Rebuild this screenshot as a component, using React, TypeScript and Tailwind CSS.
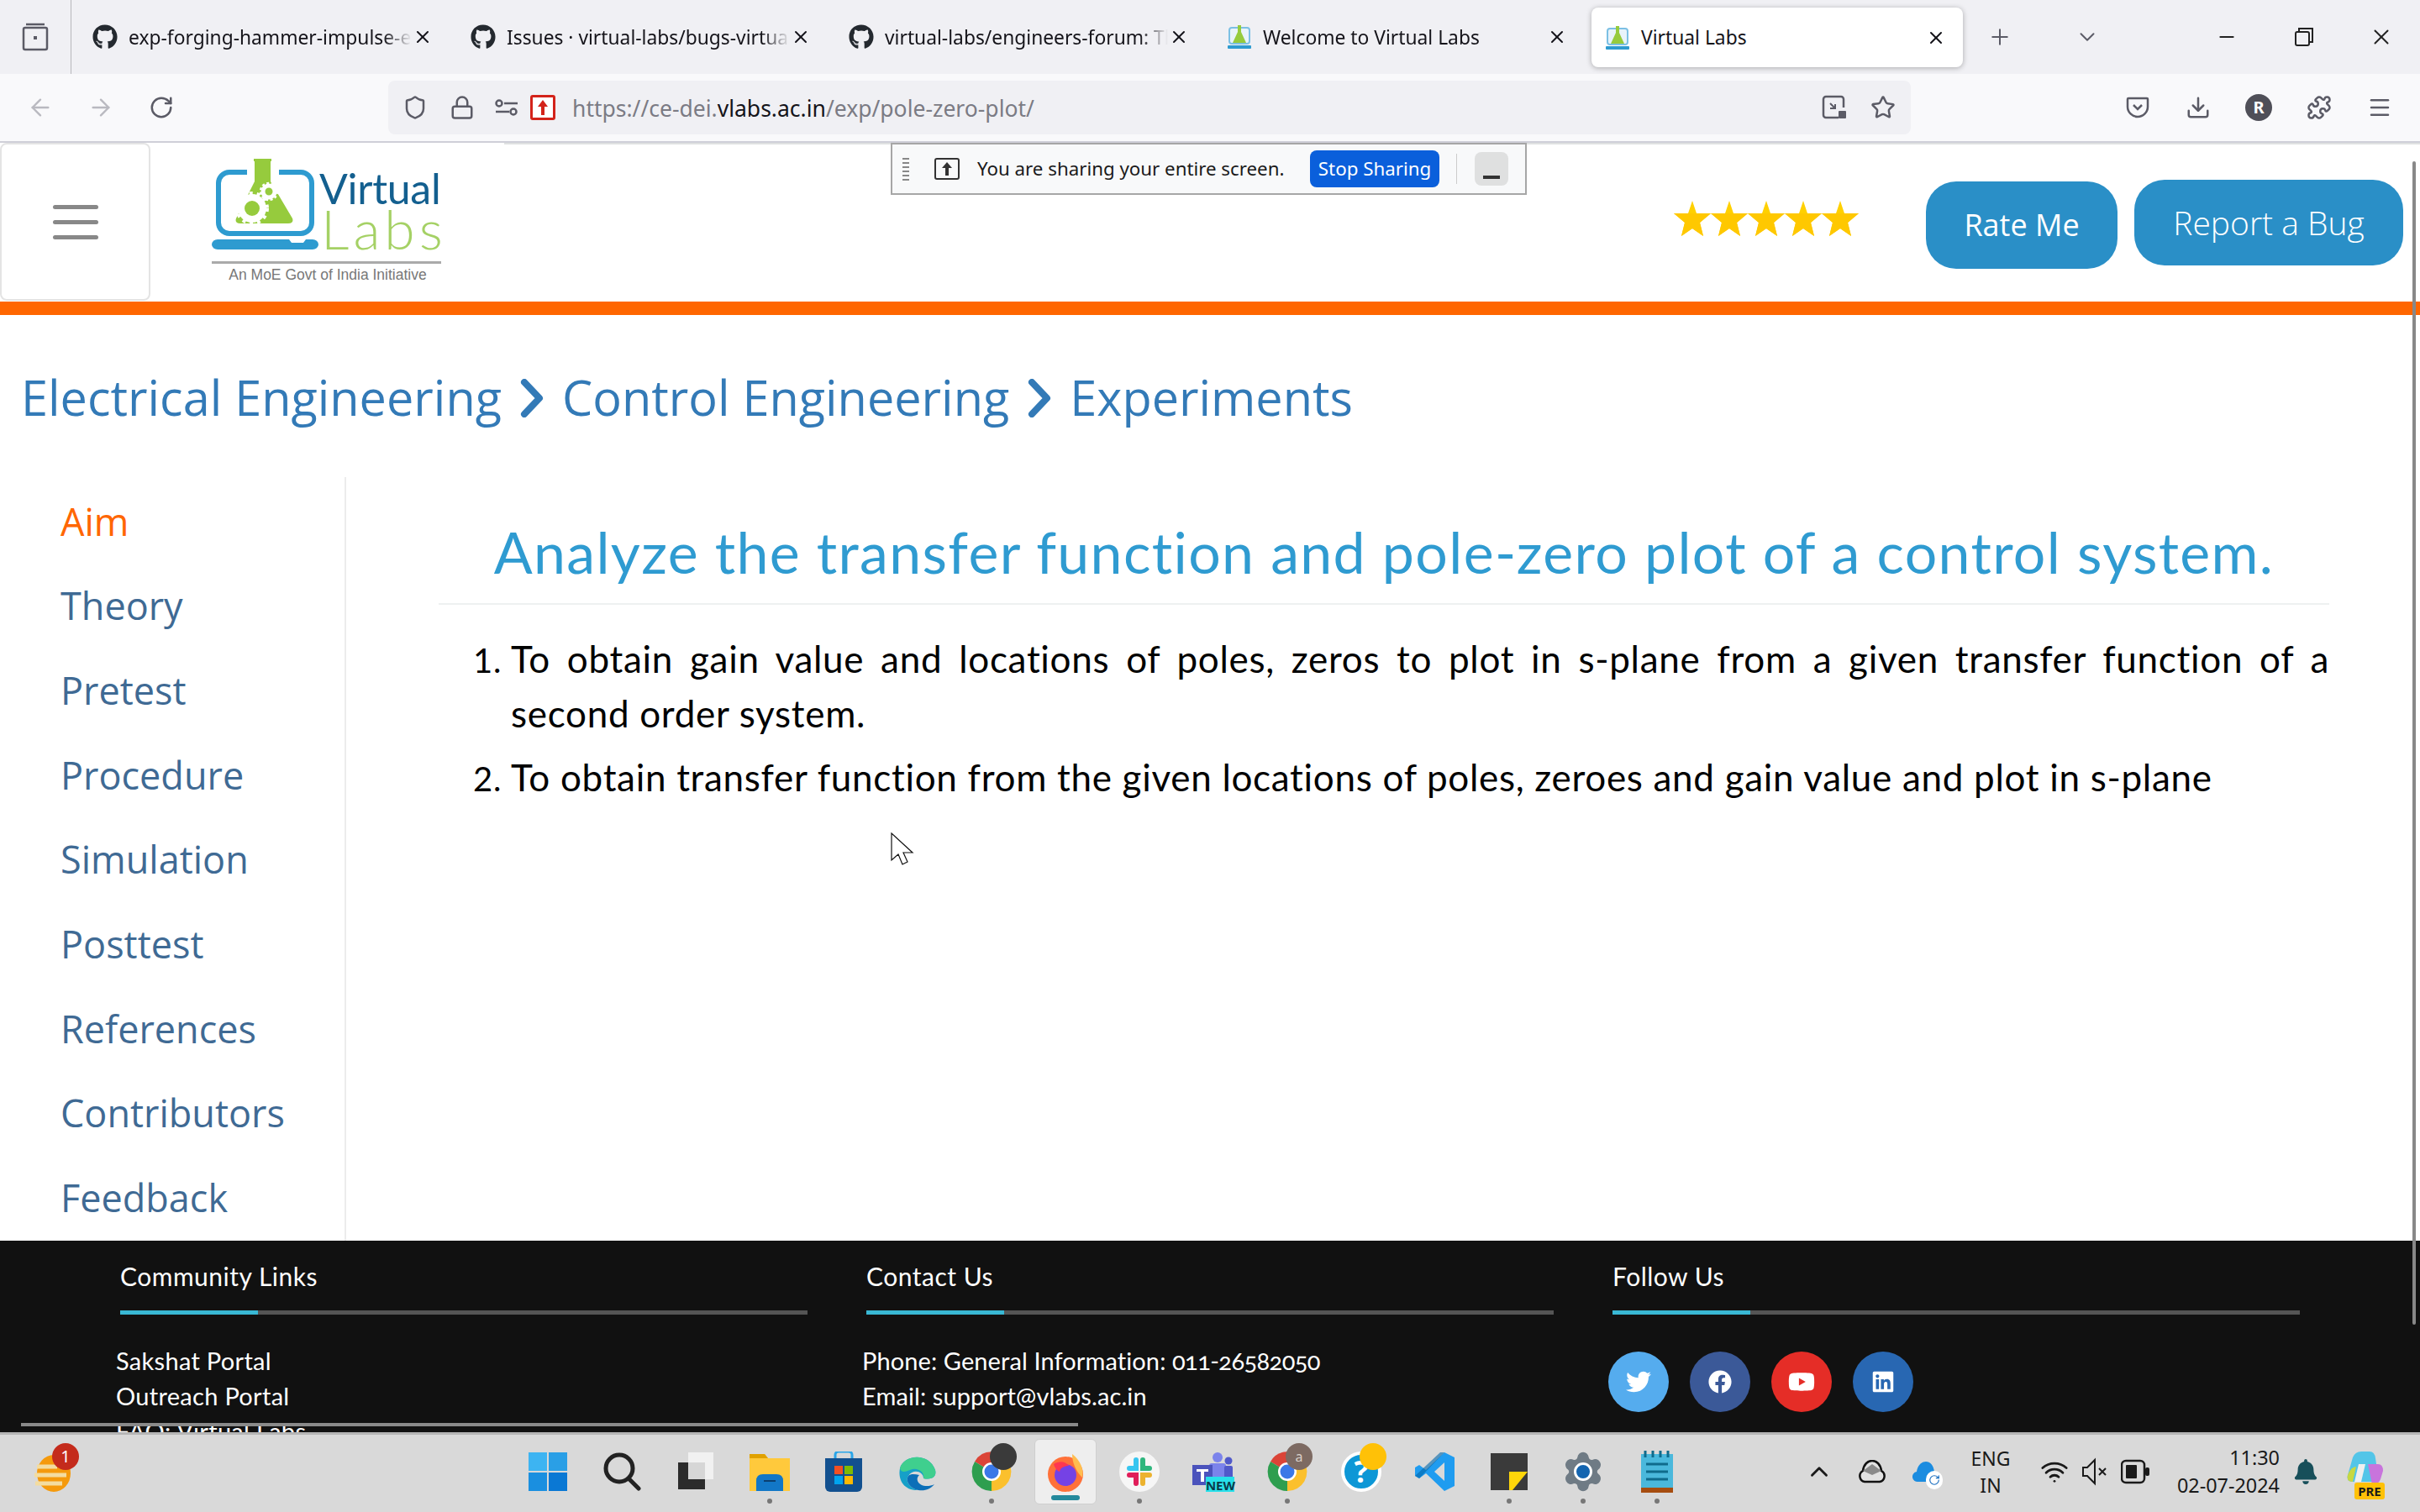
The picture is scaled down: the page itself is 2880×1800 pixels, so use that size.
import React from 'react';
import { ArrowLeft, ArrowRight, RotateCw, Shield, Lock, Star, Download, Puzzle, Menu, X, Plus, ChevronDown, ChevronUp, Minus, Wifi, Settings } from 'lucide-react';
import { FaGithub, FaTwitter, FaFacebook, FaYoutube, FaLinkedin, FaBell } from 'react-icons/fa';

const FlaskIcon = ({ size = 30 }: { size?: number }) => (
  <svg width={size} height={size} viewBox="0 0 30 30">
    <rect x="3" y="4" width="24" height="19" rx="3" fill="#e8f3fa" stroke="#7cc0e4" strokeWidth="2" />
    <path d="M13 1h4v8l6 13H7l6-13z" fill="#96cb3d" />
    <rect x="1" y="25" width="28" height="4" rx="1" fill="#2e9bd0" />
  </svg>
);

const tabs = [
  { title: 'exp-forging-hammer-impulse-experiment', git: true },
  { title: 'Issues · virtual-labs/bugs-virtual-labs', git: true },
  { title: 'virtual-labs/engineers-forum: The forum', git: true },
  { title: 'Welcome to Virtual Labs', git: false },
];

function Tab({ title, git }: { title: string; git: boolean }) {
  return (
    <div className="flex h-[72px] w-[442px] items-center">
      <div className="ml-[20px] w-[43px] shrink-0">
        {git ? <FaGithub size={30} color="#24292f" /> : <FlaskIcon />}
      </div>
      <div className="w-[337px] overflow-hidden whitespace-nowrap pt-[3px] text-[22.8px] text-[#15141a] [mask-image:linear-gradient(to_right,black_90%,transparent)]">
        {title}
      </div>
      <X size={24} className="ml-[1px] text-[#15141a]" />
    </div>
  );
}

function NavIcon({ children, w = 72 }: { children: React.ReactNode; w?: number }) {
  return <div style={{ width: w }} className="flex shrink-0 items-center justify-center">{children}</div>;
}

const Logo = () => (
  <svg width="290" height="170" viewBox="0 0 290 170" className="ml-[66px] mt-[10px]">
    {/* origin sits at page 245,180 */}
    <path d="M49 25H28a13 13 0 0 0-13 13v47a13 13 0 0 0 13 13h85a13 13 0 0 0 13-13V38a13 13 0 0 0-13-13H87" fill="none" stroke="#2e9bd0" strokeWidth="6" />
    <path d="M7 105h92l3 4h14l3-4h8a7 6 0 0 1 0 12H14a7 6 0 0 1 0-12z" fill="#2e9bd0" />
    <path d="M57 9h21v3h-1v24l26 44q2 6-5 6H41q-7 0-5-6l22-44V12h-1z" fill="#96cb3d" />
    <circle cx="55" cy="68" r="13" fill="none" stroke="#fff" strokeWidth="8" />
    <circle cx="55" cy="68" r="18" fill="none" stroke="#fff" strokeWidth="4" strokeDasharray="4 5" />
    <circle cx="75" cy="48" r="7" fill="none" stroke="#fff" strokeWidth="5" />
    <circle cx="75" cy="48" r="10" fill="none" stroke="#fff" strokeWidth="2.5" strokeDasharray="3 2.5" />
    <text x="135" y="63" fontFamily="Lato, sans-serif" fontSize="50" letterSpacing="-0.3" fill="#135f8f">Virtual</text>
    <text x="137" y="117" fontFamily="Lato, sans-serif" fontSize="66" fontWeight="300" letterSpacing="5" fill="#a5d165">Labs</text>
    <rect x="7" y="131" width="273" height="3" fill="#aaaaaa" />
    <text x="145" y="153" textAnchor="middle" fontFamily="Liberation Sans, sans-serif" fontSize="17.5" fill="#777777">An MoE Govt of India Initiative</text>
  </svg>
);

const RatingStar = () => (
  <svg width="44" height="42" viewBox="0 0 44 42">
    <path d="M22 0l5 15h17L31 26l4 16-13-9-13 9 4-16L0 15h17z" fill="#ffd000" />
    <path d="M0 15h44L31 26l4 16-13-9-13 9 4-16z" fill="#ffc800" />
  </svg>
);

const Chevron = () => (
  <svg width="28" height="46" viewBox="0 0 28 46" fill="none" stroke="#337ab7" strokeWidth="8" strokeLinecap="round" strokeLinejoin="round">
    <path d="M5 4l18 19L5 42" />
  </svg>
);

const sideItems = ['Aim', 'Theory', 'Pretest', 'Procedure', 'Simulation', 'Posttest', 'References', 'Contributors', 'Feedback'];

function FooterColumn({ title, children }: { title: string; children: React.ReactNode }) {
  return (
    <div className="w-[818px] shrink-0">
      <div className="h-[40px] text-[30px] leading-[40px] tracking-[0.5px]">{title}</div>
      <div className="mt-[21px] flex h-[5px] bg-[#555555]">
        <div className="w-[164px] bg-[#39b8d4]" />
      </div>
      {children}
    </div>
  );
}

const TaskSlot = ({ children, dot }: { children: React.ReactNode; dot?: boolean }) => (
  <div className="flex w-[88px] shrink-0 flex-col items-center pt-[20px]">
    <div className="relative h-[48px] w-[56px] flex items-center justify-center">{children}</div>
    {dot && <div className="mt-[8px] h-[6px] w-[6px] rounded-full bg-[#777777]" />}
  </div>
);

const ChromeIcon = () => (
  <svg width="48" height="48" viewBox="0 0 48 48">
    <path d="M24 24 4 12A23 23 0 0 1 44 12z" fill="#db4437" />
    <path d="M24 24 44 12A23 23 0 0 1 24 47z" fill="#fbc02d" />
    <path d="M24 24 24 47A23 23 0 0 1 4 12z" fill="#2e9e4f" />
    <circle cx="24" cy="24" r="11" fill="#fff" />
    <circle cx="24" cy="24" r="8.5" fill="#3b78e7" />
  </svg>
);

export default function App() {
  return (
    <div className="relative flex h-[1800px] w-[2880px] flex-col overflow-hidden bg-white font-['Noto_Sans',sans-serif]">
      {/* tab strip */}
      <div className="flex h-[88px] shrink-0 items-center bg-[#f0f0f4]">
        <div className="flex h-full w-[85px] shrink-0 items-center justify-center border-r border-[#b8b8bc]">
          <svg width="32" height="34" viewBox="0 0 32 34" fill="none" stroke="#5b5b66" strokeWidth="2.5">
            <path d="M5 2h22M2 8a2 2 0 0 1 2-2h24a2 2 0 0 1 2 2v22a2 2 0 0 1-2 2H4a2 2 0 0 1-2-2z" />
            <rect x="14" y="16" width="4" height="4" fill="#5b5b66" stroke="none" />
          </svg>
        </div>
        <div className="ml-[5px] flex gap-[8px]">
          {tabs.map(t => <Tab key={t.title} title={t.title} git={t.git} />)}
        </div>
        <div className="ml-[12px] flex h-[71px] w-[442px] items-center rounded-[8px] bg-white pt-[1px] shadow-[0_1px_6px_rgba(0,0,0,0.3)]">
          <div className="ml-[16px] w-[43px]"><FlaskIcon /></div>
          <div className="w-[339px] pt-[2px] text-[22.8px] text-[#15141a]">Virtual Labs</div>
          <X size={24} className="text-[#15141a]" />
        </div>
        <NavIcon w={87}><Plus size={30} strokeWidth={1.6} className="text-[#5b5b66]" /></NavIcon>
        <NavIcon w={122}><ChevronDown size={30} strokeWidth={1.6} className="text-[#5b5b66]" /></NavIcon>
        <div className="ml-auto flex">
          <NavIcon w={92}><Minus size={26} strokeWidth={2} className="text-[#222]" /></NavIcon>
          <NavIcon w={92}>
            <svg width="22" height="22" viewBox="0 0 22 22" fill="none" stroke="#222" strokeWidth="2"><path d="M5 4V1h16v16h-4" /><rect x="1" y="5" width="16" height="16" rx="2" /></svg>
          </NavIcon>
          <NavIcon w={92}><X size={30} strokeWidth={1.6} className="text-[#222]" /></NavIcon>
        </div>
      </div>

      {/* nav bar */}
      <div className="flex h-[82px] shrink-0 items-center border-b-2 border-[#cfcfd8] bg-[#f9f9fb] pl-[12px]">
        <NavIcon><ArrowLeft size={32} strokeWidth={1.8} className="text-[#b9b9c0]" /></NavIcon>
        <NavIcon><ArrowRight size={32} strokeWidth={1.8} className="text-[#b9b9c0]" /></NavIcon>
        <NavIcon><RotateCw size={30} strokeWidth={2} className="text-[#5b5b66]" /></NavIcon>
        <div className="ml-[234px] flex h-[64px] w-[1812px] items-center rounded-[8px] bg-[#f0f0f4]">
          <NavIcon w={64}><Shield size={30} strokeWidth={2} className="text-[#5b5b66]" /></NavIcon>
          <NavIcon w={48}><Lock size={30} strokeWidth={2} className="text-[#5b5b66]" /></NavIcon>
          <NavIcon w={57}>
            <svg width="28" height="20" viewBox="0 0 28 20" fill="none" stroke="#5b5b66" strokeWidth="2.5"><circle cx="5" cy="5" r="3.5" /><path d="M11 5h16M1 15h16" /><circle cx="22" cy="15" r="3.5" /></svg>
          </NavIcon>
          <div className="flex h-[30px] w-[30px] items-center justify-center rounded-[3px] border-[3px] border-[#d3231a] bg-white">
            <svg width="14" height="18" viewBox="0 0 14 18"><path d="M7 0l6 8H9v10H5V8H1z" fill="#d3231a" /></svg>
          </div>
          <div className="ml-[20px] whitespace-nowrap pt-[4px] text-[26.5px] text-[#7b7b84]">
            https://ce-dei.<span className="text-[#15141a]">vlabs.ac.in</span>/exp/pole-zero-plot/
          </div>
          <div className="ml-auto flex items-center pr-[4px]">
            <NavIcon w={58}>
              <svg width="30" height="30" viewBox="0 0 30 30" fill="none" stroke="#5b5b66" strokeWidth="2.5"><path d="M20 27H5a3 3 0 0 1-3-3V5a3 3 0 0 1 3-3h18a3 3 0 0 1 3 3v10" /><path d="M10 10l6 6M10 16h6v-5" strokeWidth="2" /><rect x="20" y="19" width="9" height="9" rx="1" fill="#5b5b66" stroke="none" /></svg>
            </NavIcon>
            <NavIcon w={58}><Star size={30} strokeWidth={2} className="text-[#5b5b66]" /></NavIcon>
          </div>
        </div>
        <div className="ml-[234px] flex">
          <NavIcon>
            <svg width="28" height="26" viewBox="0 0 28 26" fill="none" stroke="#5b5b66" strokeWidth="2.5"><path d="M2 3a1 1 0 0 1 1-1h22a1 1 0 0 1 1 1v9a12 12 0 0 1-24 0z" /><path d="M9 10l5 5 5-5" /></svg>
          </NavIcon>
          <NavIcon><Download size={30} strokeWidth={2} className="text-[#5b5b66]" /></NavIcon>
          <NavIcon>
            <div className="flex h-[32px] w-[32px] items-center justify-center rounded-full bg-[#4f4f58] text-[20px] font-bold text-white">R</div>
          </NavIcon>
          <NavIcon><Puzzle size={30} strokeWidth={2} className="text-[#5b5b66]" /></NavIcon>
          <NavIcon><Menu size={30} strokeWidth={2} className="text-[#5b5b66]" /></NavIcon>
        </div>
      </div>

      {/* web page */}
      <div className="min-h-0 flex-1 overflow-hidden">
        <header className="flex h-[189px] items-start">
          <div className="flex h-[188px] w-[179px] shrink-0 flex-col items-center justify-center gap-[13px] rounded-[8px] border-2 border-[#e4e4e4]">
            <div className="h-[5px] w-[54px] rounded bg-[#888888]" />
            <div className="h-[5px] w-[54px] rounded bg-[#888888]" />
            <div className="h-[5px] w-[54px] rounded bg-[#888888]" />
          </div>
          <Logo />
          <div className="ml-[1457px] flex pt-[69px]">
            {[0, 1, 2, 3, 4].map(i => <RatingStar key={i} />)}
          </div>
          <div className="ml-[80px] mt-[46px] flex h-[104px] w-[228px] shrink-0 items-center justify-center rounded-[36px] bg-[#2a8fc7] font-['Open_Sans',sans-serif] text-[36px] text-white">
            Rate Me
          </div>
          <div className="ml-[20px] mt-[44px] flex h-[102px] w-[320px] shrink-0 items-center justify-center rounded-[36px] bg-[#2a8fc7] font-['Open_Sans',sans-serif] text-[39px] font-light text-white">
            Report a Bug
          </div>
        </header>
        <div className="h-[16px] bg-[#ff6600]" />

        <div className="flex h-[193px] items-center gap-[22px] pl-[25px] pt-[4px] font-['Open_Sans',sans-serif] text-[57.6px] text-[#337ab7]">
          <span>Electrical Engineering</span>
          <Chevron />
          <span>Control Engineering</span>
          <Chevron />
          <span>Experiments</span>
        </div>

        <div className="flex h-[909px]">
          <aside className="w-[412px] shrink-0 overflow-hidden border-r-2 border-[#ececec] pl-[72px] pt-[2px] font-['Open_Sans',sans-serif] text-[45px] font-medium">
            {sideItems.map((item, i) => (
              <div key={item} className={`flex h-[100.7px] items-center ${i === 0 ? 'text-[#ff6600]' : 'text-[#3f6a94]'}`}>{item}</div>
            ))}
          </aside>
          <main className="ml-[110px] w-[2250px] shrink-0 font-['Lato',sans-serif]">
            <h1 className="flex h-[152px] items-center justify-center whitespace-nowrap border-b-2 border-[#eef1f1] pt-[27px] text-[68px] tracking-[1.36px] text-[#2f9bd1]">
              Analyze the transfer function and pole-zero plot of a control system.
            </h1>
            <ol className="mt-[32px] list-decimal pl-[86px] text-justify text-[44px] leading-[65px] tracking-[0.7px] text-black marker:text-[40px]">
              <li className="mb-[11px]">To obtain gain value and locations of poles, zeros to plot in s-plane from a given transfer function of a second order system.</li>
              <li>To obtain transfer function from the given locations of poles, zeroes and gain value and plot in s-plane</li>
            </ol>
          </main>
        </div>

        <footer className="flex gap-[70px] bg-[#111111] pl-[143px] pt-[22px] font-['Lato',sans-serif] text-white">
          <FooterColumn title="Community Links">
            <div className="-ml-[5px] mt-[34px] text-[29px] leading-[42px] tracking-[0.3px]">
              <div>Sakshat Portal</div>
              <div>Outreach Portal</div>
              <div>FAQ: Virtual Labs</div>
            </div>
          </FooterColumn>
          <FooterColumn title="Contact Us">
            <div className="-ml-[5px] mt-[34px] text-[29px] leading-[42px] tracking-[0.1px]">
              <div>Phone: General Information: <span className="tracking-[-0.6px] [font-variant-numeric:oldstyle-nums]">011-26582050</span></div>
              <div>Email: support@vlabs.ac.in</div>
            </div>
          </FooterColumn>
          <FooterColumn title="Follow Us">
            <div className="-ml-[5px] mt-[44px] flex gap-[25px]">
              <div className="flex h-[72px] w-[72px] items-center justify-center rounded-full bg-[#55acee]"><FaTwitter size={30} /></div>
              <div className="flex h-[72px] w-[72px] items-center justify-center rounded-full bg-[#3b5998]"><FaFacebook size={28} /></div>
              <div className="flex h-[72px] w-[72px] items-center justify-center rounded-full bg-[#e52d27]"><FaYoutube size={32} /></div>
              <div className="flex h-[72px] w-[72px] items-center justify-center rounded-full bg-[#2867b2]"><FaLinkedin size={28} /></div>
            </div>
          </FooterColumn>
        </footer>
      </div>

      {/* windows taskbar */}
      <div className="flex h-[95px] shrink-0 border-t-[3px] border-[#b5b5b5] bg-[#d9d9d9] text-[#1a1a1a]">
        <div className="relative ml-[40px] mt-[24px] h-[44px] w-[568px] shrink-0">
          <svg width="46" height="44" viewBox="0 0 46 44">
            <ellipse cx="24" cy="22" rx="20" ry="22" fill="#f59a0c" />
            <path d="M4 14h24M1 24h38M2 34h32" stroke="#f3dca0" strokeWidth="5" />
          </svg>
          <div className="absolute left-[22px] top-[-14px] flex h-[32px] w-[32px] items-center justify-center rounded-full bg-[#c42b1c] text-[20px] text-white">1</div>
        </div>
        <TaskSlot>
          <svg width="46" height="46" viewBox="0 0 46 46"><path d="M0 0h22v22H0z" fill="#3db4f2" /><path d="M24 0h22v22H24z" fill="#2a9fe6" /><path d="M0 24h22v22H0z" fill="#1a8fe0" /><path d="M24 24h22v22H24z" fill="#0a78d4" /></svg>
        </TaskSlot>
        <TaskSlot>
          <svg width="46" height="46" viewBox="0 0 46 46" fill="none" stroke="#222" strokeWidth="5"><circle cx="20" cy="19" r="16" /><path d="M31 31l12 12" strokeLinecap="round" /></svg>
        </TaskSlot>
        <TaskSlot>
          <svg width="46" height="46" viewBox="0 0 46 46"><rect x="2" y="12" width="32" height="32" fill="#2b2b2b" /><rect x="14" y="0" width="30" height="32" fill="#f4f4f4" fillOpacity="0.85" /></svg>
        </TaskSlot>
        <TaskSlot dot>
          <svg width="48" height="46" viewBox="0 0 48 46"><path d="M0 2h18l4 5h26v39H0z" fill="#ffc93c" /><path d="M0 2h18l4 5H0z" fill="#e0a100" /><path d="M8 46V34q0-8 8-8h16q8 0 8 8v12z" fill="#1277c7" /><path d="M17 34h14" stroke="#0b3f70" strokeWidth="2" /></svg>
        </TaskSlot>
        <TaskSlot>
          <svg width="44" height="48" viewBox="0 0 44 48"><path d="M0 8h44v34a6 6 0 0 1-6 6H6a6 6 0 0 1-6-6z" fill="#12508f" /><path d="M12 8V4a4 4 0 0 1 4-4h12a4 4 0 0 1 4 4v4" fill="none" stroke="#2aa5e8" strokeWidth="3" /><rect x="11" y="17" width="10" height="10" fill="#f25022" /><rect x="23" y="17" width="10" height="10" fill="#7fba00" /><rect x="11" y="29" width="10" height="10" fill="#00a4ef" /><rect x="23" y="29" width="10" height="10" fill="#ffb900" /></svg>
        </TaskSlot>
        <TaskSlot>
          <svg width="48" height="48" viewBox="0 0 48 48"><path d="M3 20C7 4 37 0 45 22c2 8-4 12-14 10 0-8-12-12-18-3-4 6 2 15 12 17C10 47 0 36 3 20z" fill="#16a0c8" /><path d="M3 20C7 4 37 0 45 22c2 8-4 12-14 10 2-8-8-14-16-10-6 2-10 4-12-2z" fill="#3fcf8e" /><path d="M13 29c-4 6 2 15 12 17 8 1 14-1 19-7-8 4-18 2-20-4-1-3 0-5 2-7-5-1-10-2-13 1z" fill="#0c6fb8" /></svg>
        </TaskSlot>
        <TaskSlot dot>
          <ChromeIcon />
          <div className="absolute right-[-2px] top-[-10px] h-[32px] w-[32px] rounded-full bg-[#3a3a3a]" />
        </TaskSlot>
        <div className="flex w-[88px] shrink-0 justify-center pt-[5px]">
          <div className="flex h-[78px] w-[74px] flex-col items-center rounded-[6px] border border-[#cfcfcf] bg-[#eeeeee] pt-[15px]">
            <svg width="44" height="48" viewBox="0 0 44 48">
              <circle cx="22" cy="26" r="21" fill="#ff7139" />
              <path d="M30 2c10 8 14 18 12 28C34 22 30 12 30 2z" fill="#ffbd4f" />
              <circle cx="22" cy="27" r="13" fill="#7542e5" />
              <path d="M8 14c6-4 14-4 18 2-5 0-10 2-11 7-3-1-6-5-7-9z" fill="#ff3750" />
            </svg>
            <div className="mt-[3px] h-[6px] w-[34px] rounded bg-[#24899c]" />
          </div>
        </div>
        <TaskSlot dot>
          <svg width="48" height="48" viewBox="0 0 48 48"><circle cx="24" cy="24" r="24" fill="#f6f6f6" /><path d="M20 10v10h-8" stroke="#36c5f0" strokeWidth="6" strokeLinecap="round" fill="none" /><path d="M28 10v10h8" stroke="#2eb67d" strokeWidth="6" strokeLinecap="round" fill="none" /><path d="M12 28h8v10" stroke="#e01e5a" strokeWidth="6" strokeLinecap="round" fill="none" /><path d="M36 28h-8v10" stroke="#ecb22e" strokeWidth="6" strokeLinecap="round" fill="none" /></svg>
        </TaskSlot>
        <TaskSlot>
          <svg width="50" height="48" viewBox="0 0 50 48"><circle cx="30" cy="7" r="6" fill="#7b83eb" /><circle cx="43" cy="11" r="4.5" fill="#5059c9" /><rect x="20" y="14" width="20" height="24" rx="3" fill="#7b83eb" /><rect x="38" y="17" width="10" height="18" rx="2" fill="#5059c9" /><rect x="0" y="16" width="24" height="24" fill="#4b53bc" /><path d="M5 21h14v3h-5v12h-4V24H5z" fill="#fff" /><rect x="16" y="30" width="34" height="18" fill="#27e0ea" /></svg>
          <span className="absolute bottom-[-2px] right-[2px] text-[15px] font-bold leading-[20px] text-[#0b3a4a]">NEW</span>
        </TaskSlot>
        <TaskSlot dot>
          <ChromeIcon />
          <div className="absolute right-[-2px] top-[-10px] flex h-[32px] w-[32px] items-center justify-center rounded-full bg-[#7d6a62] text-[16px] text-[#d8cfc8]">a</div>
        </TaskSlot>
        <TaskSlot>
          <div className="flex h-[48px] w-[48px] items-center justify-center rounded-full border-[4px] border-white bg-[#0d97d6] text-[36px] font-bold text-white">?</div>
          <div className="absolute right-[-2px] top-[-10px] h-[32px] w-[32px] rounded-full bg-[#ffc107]" />
        </TaskSlot>
        <TaskSlot>
          <svg width="48" height="48" viewBox="0 0 48 48"><path d="M35 1 47 7v34l-12 6L13 26l-8 6-5-3V19l5-3 8 6z" fill="#1f9cf0" /><path d="M35 13 23 24l12 11z" fill="#d9d9d9" /><path d="M35 1 5 32l-5-3 30-28z" fill="#0065a9" fillOpacity="0.6" /></svg>
        </TaskSlot>
        <TaskSlot dot>
          <svg width="44" height="44" viewBox="0 0 44 44"><rect width="44" height="44" fill="#3a3a3a" /><path d="M22 22h22L26 44H22z" fill="#ffd60a" /></svg>
        </TaskSlot>
        <TaskSlot dot>
          <div className="relative flex items-center justify-center">
            <Settings size={52} fill="#6f7b85" stroke="#6f7b85" strokeWidth={1.5} />
            <div className="absolute h-[22px] w-[22px] rounded-full border-[3px] border-white bg-[#1465b0]" />
          </div>
        </TaskSlot>
        <TaskSlot dot>
          <svg width="38" height="50" viewBox="0 0 38 50"><rect y="4" width="38" height="40" fill="#4ab8dc" /><rect y="44" width="38" height="6" fill="#a64d10" /><path d="M5 0v8M14 0v8M23 0v8M32 0v8" stroke="#0f6b8c" strokeWidth="3" /><path d="M6 16h26M6 25h26M6 34h26" stroke="#0f6b8c" strokeWidth="3" /></svg>
        </TaskSlot>

        {/* system tray */}
        <div className="ml-[129px] flex h-full items-center pb-[4px]">
          <ChevronUp size={34} className="w-[40px]" strokeWidth={2} />
          <div className="ml-[19px] flex w-[48px] justify-center">
            <svg width="34" height="28" viewBox="0 0 34 28"><path d="M8 26a7 7 0 0 1-2-13C7 5 12 1 17 1s10 4 11 12a7 7 0 0 1-2 13z" fill="#e2e2e2" stroke="#111" strokeWidth="2.5" /><path d="M6 13l11-8 11 8-11 5z" fill="#8a8a8a" /></svg>
          </div>
          <div className="relative ml-[16px] flex w-[48px] justify-center">
            <svg width="32" height="26" viewBox="0 0 32 26"><path d="M7 25a6 6 0 0 1-2-12C6 5 11 1 16 1s9 4 10 12a6 6 0 0 1-2 12z" fill="#1b8ce0" /></svg>
            <div className="absolute bottom-[-8px] right-[4px] flex h-[22px] w-[20px] items-center justify-center rounded-full bg-white"><RotateCw size={14} className="text-[#1b6fc0]" /></div>
          </div>
          <div className="ml-[18px] w-[70px] text-center text-[23px] leading-[32px]">ENG<br />IN</div>
          <div className="ml-[21px] flex w-[40px] justify-center"><Wifi size={34} strokeWidth={2} /></div>
          <div className="ml-[8px] flex w-[40px] justify-center">
            <svg width="32" height="34" viewBox="0 0 32 34" fill="none" stroke="#1a1a1a" strokeWidth="2"><path d="M2 12h5l9-9v28l-9-9H2z" /><path d="M21 13l8 8m0-8l-8 8" /></svg>
          </div>
          <div className="ml-[8px] flex w-[40px] justify-center">
            <svg width="34" height="30" viewBox="0 0 34 30"><rect x="1" y="2" width="27" height="26" rx="5" fill="none" stroke="#1a1a1a" strokeWidth="2.5" /><rect x="6" y="7" width="13" height="16" rx="1" fill="#1a1a1a" /><rect x="29" y="10" width="5" height="10" rx="2" fill="#1a1a1a" /></svg>
          </div>
          <div className="ml-[19px] w-[133px] text-right text-[23.4px] leading-[33px]">11:30<br />02-07-2024</div>
          <div className="ml-[13px] flex w-[36px] justify-center"><FaBell size={30} color="#174f5a" /></div>
          <div className="relative ml-[28px] w-[52px]">
            <svg width="48" height="50" viewBox="0 0 48 50"><path d="M10 8q3-7 10-7h10q6 0 7 8l3 20q1 8-7 8H10Q2 37 4 29z" fill="#53c5e8" /><path d="M4 29q4-10 10-10l-4 18q-8 0-6-8z" fill="#c8d841" /><path d="M28 16h12q6 0 6 8l-3 10q-2 6-10 6z" fill="#c874dc" /><path d="M17 16h8l-5 21h-8z" fill="#efefef" /></svg>
            <div className="absolute bottom-[-8px] left-[12px] flex h-[20px] w-[36px] items-center justify-center rounded-[3px] bg-[#ffc107] text-[15px] font-bold text-[#1a1a1a]">PRE</div>
          </div>
        </div>
      </div>

      {/* thicker part of the line under the toolbar */}
      <div className="absolute left-[600px] top-[170px] h-[2px] w-[2280px] bg-[#dfe1e1]" />

      {/* screen sharing bar, sits over the page */}
      <div className="absolute left-[1060px] top-[170px] flex h-[62px] w-[757px] items-center border-2 border-[#a6a6a6] bg-[#f8f9fa] text-[22.3px] text-[#1a1a1a]">
        <div className="ml-[12px] flex flex-col gap-[3px]">
          {[0, 1, 2, 3, 4, 5].map(i => <div key={i} className="h-[2px] w-[8px] bg-[#888888]" />)}
        </div>
        <div className="ml-[30px] flex h-[26px] w-[30px] items-center justify-center rounded-[3px] border-2 border-[#333333]">
          <svg width="12" height="16" viewBox="0 0 12 16"><path d="M6 0l6 7H8v9H4V7H0z" fill="#333333" /></svg>
        </div>
        <div className="ml-[21px] w-[396px] whitespace-nowrap">You are sharing your entire screen.</div>
        <div className="flex h-[44px] w-[154px] items-center justify-center rounded-[8px] bg-[#0a5fdb] text-white">Stop Sharing</div>
        <div className="ml-[20px] h-[36px] w-px bg-[#cccccc]" />
        <div className="ml-[21px] flex h-[40px] w-[40px] items-end justify-center rounded-[8px] bg-[#dfe0e0] pb-[8px]">
          <div className="h-[4px] w-[20px] bg-[#333333]" />
        </div>
      </div>

      {/* page scrollbars */}
      <div className="absolute left-[2871px] top-[192px] h-[1385px] w-[4px] rounded bg-[#888888]" />
      <div className="absolute left-[25px] top-[1694px] h-[4px] w-[1258px] bg-[#8a8a8a]" />

      {/* mouse pointer */}
      <svg className="absolute left-[1060px] top-[991px]" width="28" height="40" viewBox="0 0 28 40">
        <path d="M1 1v32l8-7 5 12 6-3-5-11h11z" fill="#fff" stroke="#111" strokeWidth="1.2" />
      </svg>
    </div>
  );
}
